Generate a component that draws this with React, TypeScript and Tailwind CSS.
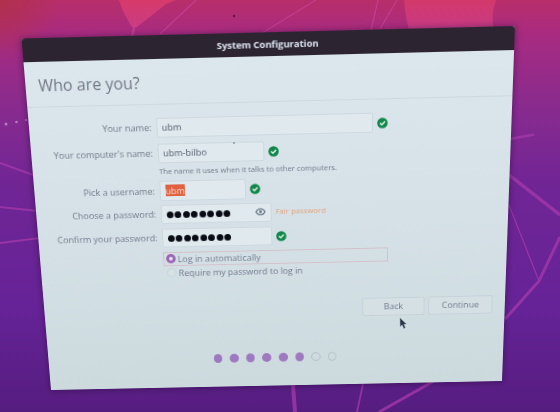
import type { ReactNode } from "react";

type Point = [number, number];

const WIDTH = 490;
const HEIGHT = 370;
const CORNERS: [Point, Point, Point, Point] = [
  [21.5, 38.5],
  [515, 26],
  [502, 381],
  [51, 390],
];

/** Projects a WIDTH x HEIGHT box onto the four corners of the monitor window. */
function projection([p0, p1, p2, p3]: [Point, Point, Point, Point]) {
  const dx1 = p1[0] - p2[0];
  const dx2 = p3[0] - p2[0];
  const dx3 = p0[0] - p1[0] + p2[0] - p3[0];
  const dy1 = p1[1] - p2[1];
  const dy2 = p3[1] - p2[1];
  const dy3 = p0[1] - p1[1] + p2[1] - p3[1];
  const det = dx1 * dy2 - dx2 * dy1;
  const g = (dx3 * dy2 - dx2 * dy3) / det;
  const h = (dx1 * dy3 - dx3 * dy1) / det;
  const a = (p1[0] - p0[0] + g * p1[0]) / WIDTH;
  const d = (p1[1] - p0[1] + g * p1[1]) / WIDTH;
  const b = (p3[0] - p0[0] + h * p3[0]) / HEIGHT;
  const e = (p3[1] - p0[1] + h * p3[1]) / HEIGHT;
  return `matrix3d(${[a, d, 0, g / WIDTH, b, e, 0, h / HEIGHT, 0, 0, 1, 0, p0[0], p0[1], 0, 1].join(",")})`;
}

function Wallpaper() {
  return (
    <svg className="absolute inset-0" width="560" height="412" viewBox="0 0 560 412">
      <defs>
        <linearGradient id="base" x1="0" y1="0" x2="0" y2="1">
          <stop offset="0" stopColor="#b82e6a" />
          <stop offset="0.08" stopColor="#a92b80" />
          <stop offset="0.25" stopColor="#8a2b8e" />
          <stop offset="0.45" stopColor="#702595" />
          <stop offset="0.75" stopColor="#652397" />
          <stop offset="1" stopColor="#561d80" />
        </linearGradient>
        <radialGradient id="corner" cx="0" cy="0" r="60" gradientUnits="userSpaceOnUse">
          <stop offset="0" stopColor="#b0304c" />
          <stop offset="1" stopColor="#b0304c" stopOpacity="0" />
        </radialGradient>
        <linearGradient id="petal" x1="0" y1="0" x2="0" y2="30" gradientUnits="userSpaceOnUse">
          <stop offset="0" stopColor="#d63a6a" />
          <stop offset="1" stopColor="#c93c86" />
        </linearGradient>
      </defs>
      <rect width="560" height="412" fill="url(#base)" />
      <rect width="560" height="412" fill="url(#corner)" />
      <path d="M119 0C123 12 127 19 132 27L137 27L166 4L176 0Z" fill="url(#petal)" />
      <path d="M404 0C405 12 407 22 409 30L493 27C492 18 493 8 496 0Z" fill="url(#petal)" opacity="0.9" />
      <g fill="none" stroke="#c64296" strokeWidth="1.3" opacity="0.75">
        <path d="M135 24L132 36" strokeWidth="2.5" />
        <path d="M196 0L160 34M316 0L262 33M378 0L371 30M397 0L380 29" />
      </g>
      <g fill="none" stroke="#a53aab" opacity="0.75">
        <path d="M0 163L33 175M0 207L38 211M0 243L40 238" strokeWidth="2" />
        <path d="M510 139L534 134.5" strokeWidth="2.5" />
        <path d="M508 174L560 215" strokeWidth="3.5" />
        <path d="M509 205L539 281" strokeWidth="1.3" />
        <path d="M560 237L539 281L505 319" strokeWidth="3" />
        <path d="M434 381L379 412" strokeWidth="3" />
        <path d="M363 384L357 412" strokeWidth="1.8" />
        <path d="M293 385L295 412" strokeWidth="4" />
      </g>
      <g fill="#b87bb9">
        <circle cx="6" cy="124" r="1.5" />
        <circle cx="16.5" cy="122" r="1.3" />
        <circle cx="26" cy="120" r="1" />
      </g>
      <circle cx="234" cy="16" r="1.2" fill="#5c1749" />
    </svg>
  );
}

function Check() {
  return (
    <svg className="h-[11px] w-[11px] shrink-0" viewBox="0 0 11 11">
      <circle cx="5.5" cy="5.5" r="5.3" fill="#12874b" />
      <path d="M3 5.5L4.9 7.3L8.1 3.9" fill="none" stroke="#e4f5ec" strokeWidth="1.5" />
    </svg>
  );
}

function Row({ label, className, children }: { label: ReactNode; className: string; children: ReactNode }) {
  return (
    <div className={`flex h-[20.7px] items-center ${className}`}>
      <div className="mr-[5.2px] flex w-[125px] shrink-0 justify-end whitespace-nowrap">{label}</div>
      {children}
    </div>
  );
}

const box = "flex h-full shrink-0 items-center rounded-[2px] border border-[#cdd9df] bg-[#dfe9ee] text-[#555b6b]";

function Bullets() {
  return (
    <div className="flex gap-[1.3px] pt-[1px]">
      {Array.from({ length: 8 }, (_, i) => (
        <span key={i} className="h-[7.2px] w-[7.2px] rounded-full bg-[#080b14]" />
      ))}
    </div>
  );
}

function Installer() {
  return (
    <div
      className="flex h-[370px] w-[490px] origin-top-left flex-col rounded-t-[3px] bg-linear-to-b from-[#dce8ed] via-[#d5e1e6] to-[#ccdade] text-[9.4px] leading-none text-[#737b8d] shadow-[0_1px_6px_1px_rgba(45,10,65,0.5)]"
      style={{ transform: projection(CORNERS) }}
    >
      <div className="flex h-[23px] shrink-0 items-center justify-center rounded-t-[3px] bg-[#2c2430] pt-[1px] text-[9.5px] font-bold tracking-[-0.05px] text-[#dce4f2]">
        System Configuration
      </div>
      <div className="flex h-[45px] shrink-0 items-center border-b border-[#ced9df] pt-[2px] pl-[13px] text-[16.2px] text-[#737888]">
        Who are you?
      </div>

      <Row label="Your name:" className="mt-[12.6px]">
        <div className={`${box} w-[220px] pl-[4px]`}>ubm</div>
        <div className="ml-[4px] pt-[2px]"><Check /></div>
      </Row>
      <Row label="Your computer's name:" className="mt-[5.4px]">
        <div className={`${box} w-[109px] pl-[4px]`}>ubm-bilbo</div>
        <div className="ml-[4px]"><Check /></div>
      </Row>
      <div className="mt-[1px] flex h-[13px] items-center pt-[2px] pl-[130.2px] text-[7.75px]">
        The name it uses when it talks to other computers.
      </div>
      <Row label="Pick a username:" className="mt-[3.5px]">
        <div className={`${box} w-[89px] pl-[4.5px]`}>
          <span className="flex h-[11.5px] items-center bg-[#e0603f] text-[#f5d9d2]">ubm</span>
        </div>
        <div className="ml-[4px]"><Check /></div>
      </Row>
      <Row label="Choose a password:" className="mt-[4px]">
        <div className={`${box} w-[115px] justify-between pr-[5px] pl-[4.5px]`}>
          <Bullets />
          <svg className="h-[9px] w-[11px]" viewBox="0 0 11 9" fill="none" stroke="#667487" strokeWidth="1.2">
            <path d="M0.8 4.5C3 0.2 8 0.2 10.2 4.5C8 8.8 3 8.8 0.8 4.5Z" />
            <circle cx="5.5" cy="4.5" r="1.4" fill="#667487" stroke="none" />
          </svg>
        </div>
        <span className="ml-[4px] text-[7.8px] tracking-[0.1px] text-[#e3a27c]">Fair password</span>
      </Row>
      <Row label="Confirm your password:" className="mt-[4.5px]">
        <div className={`${box} w-[115px] pl-[4.5px]`}><Bullets /></div>
        <div className="ml-[4px]"><Check /></div>
      </Row>
      <div className="mt-[4.3px] ml-[129.6px] flex h-[15px] w-[236px] shrink-0 items-center border border-[#d5c0cc] pl-[2px]">
        <span className="mr-[2.5px] flex h-[10px] w-[10px] items-center justify-center rounded-full bg-[#9c64b6]">
          <span className="h-[4px] w-[4px] rounded-full bg-[#e6e4f0]" />
        </span>
        Log in automatically
      </div>
      <div className="ml-[129.6px] flex h-[15px] shrink-0 items-center pl-[3px] tracking-[-0.05px]">
        <span className="mr-[3px] h-[10px] w-[10px] rounded-full border border-[#c6d4d8] bg-[#d5e1e5]" />
        Require my password to log in
      </div>

      <div className="mt-[24px] mr-[13px] flex h-[20.7px] shrink-0 justify-end gap-[4px] text-[9.3px]">
        <div className="flex w-[66px] items-center justify-center rounded-[2px] border border-[#c6d2d9] bg-[#d5e0e5]">Back</div>
        <div className="flex w-[68px] items-center justify-center rounded-[2px] border border-[#c6d2d9] bg-[#d5e0e5]">Continue</div>
      </div>

      <div className="mt-[39px] flex justify-center gap-[8px]">
        {Array.from({ length: 8 }, (_, i) => (
          <span
            key={i}
            className={i < 6 ? "h-[9.6px] w-[9.6px] rounded-full bg-[#9f79bf]" : "h-[9.6px] w-[9.6px] rounded-full border border-[#b2c0c7]"}
          />
        ))}
      </div>
    </div>
  );
}

export default function App() {
  return (
    <div className="relative h-[412px] w-[560px] overflow-hidden bg-[#642295] font-['Open_Sans','Noto_Sans',sans-serif]">
      <Wallpaper />
      <Installer />
      <svg className="absolute top-[317px] left-[399px]" width="9" height="13" viewBox="0 0 9 13">
        <path d="M1 1L1.2 9.6L3.2 7.8L4.8 11.4L6.3 10.7L4.8 7.3L7.3 7Z" fill="#2b3648" stroke="#8d9aa8" strokeWidth="0.4" />
      </svg>
      <span className="absolute top-[142px] left-[233px] h-[1.5px] w-[2px] rounded-full bg-[#8d99a3]" />
    </div>
  );
}
